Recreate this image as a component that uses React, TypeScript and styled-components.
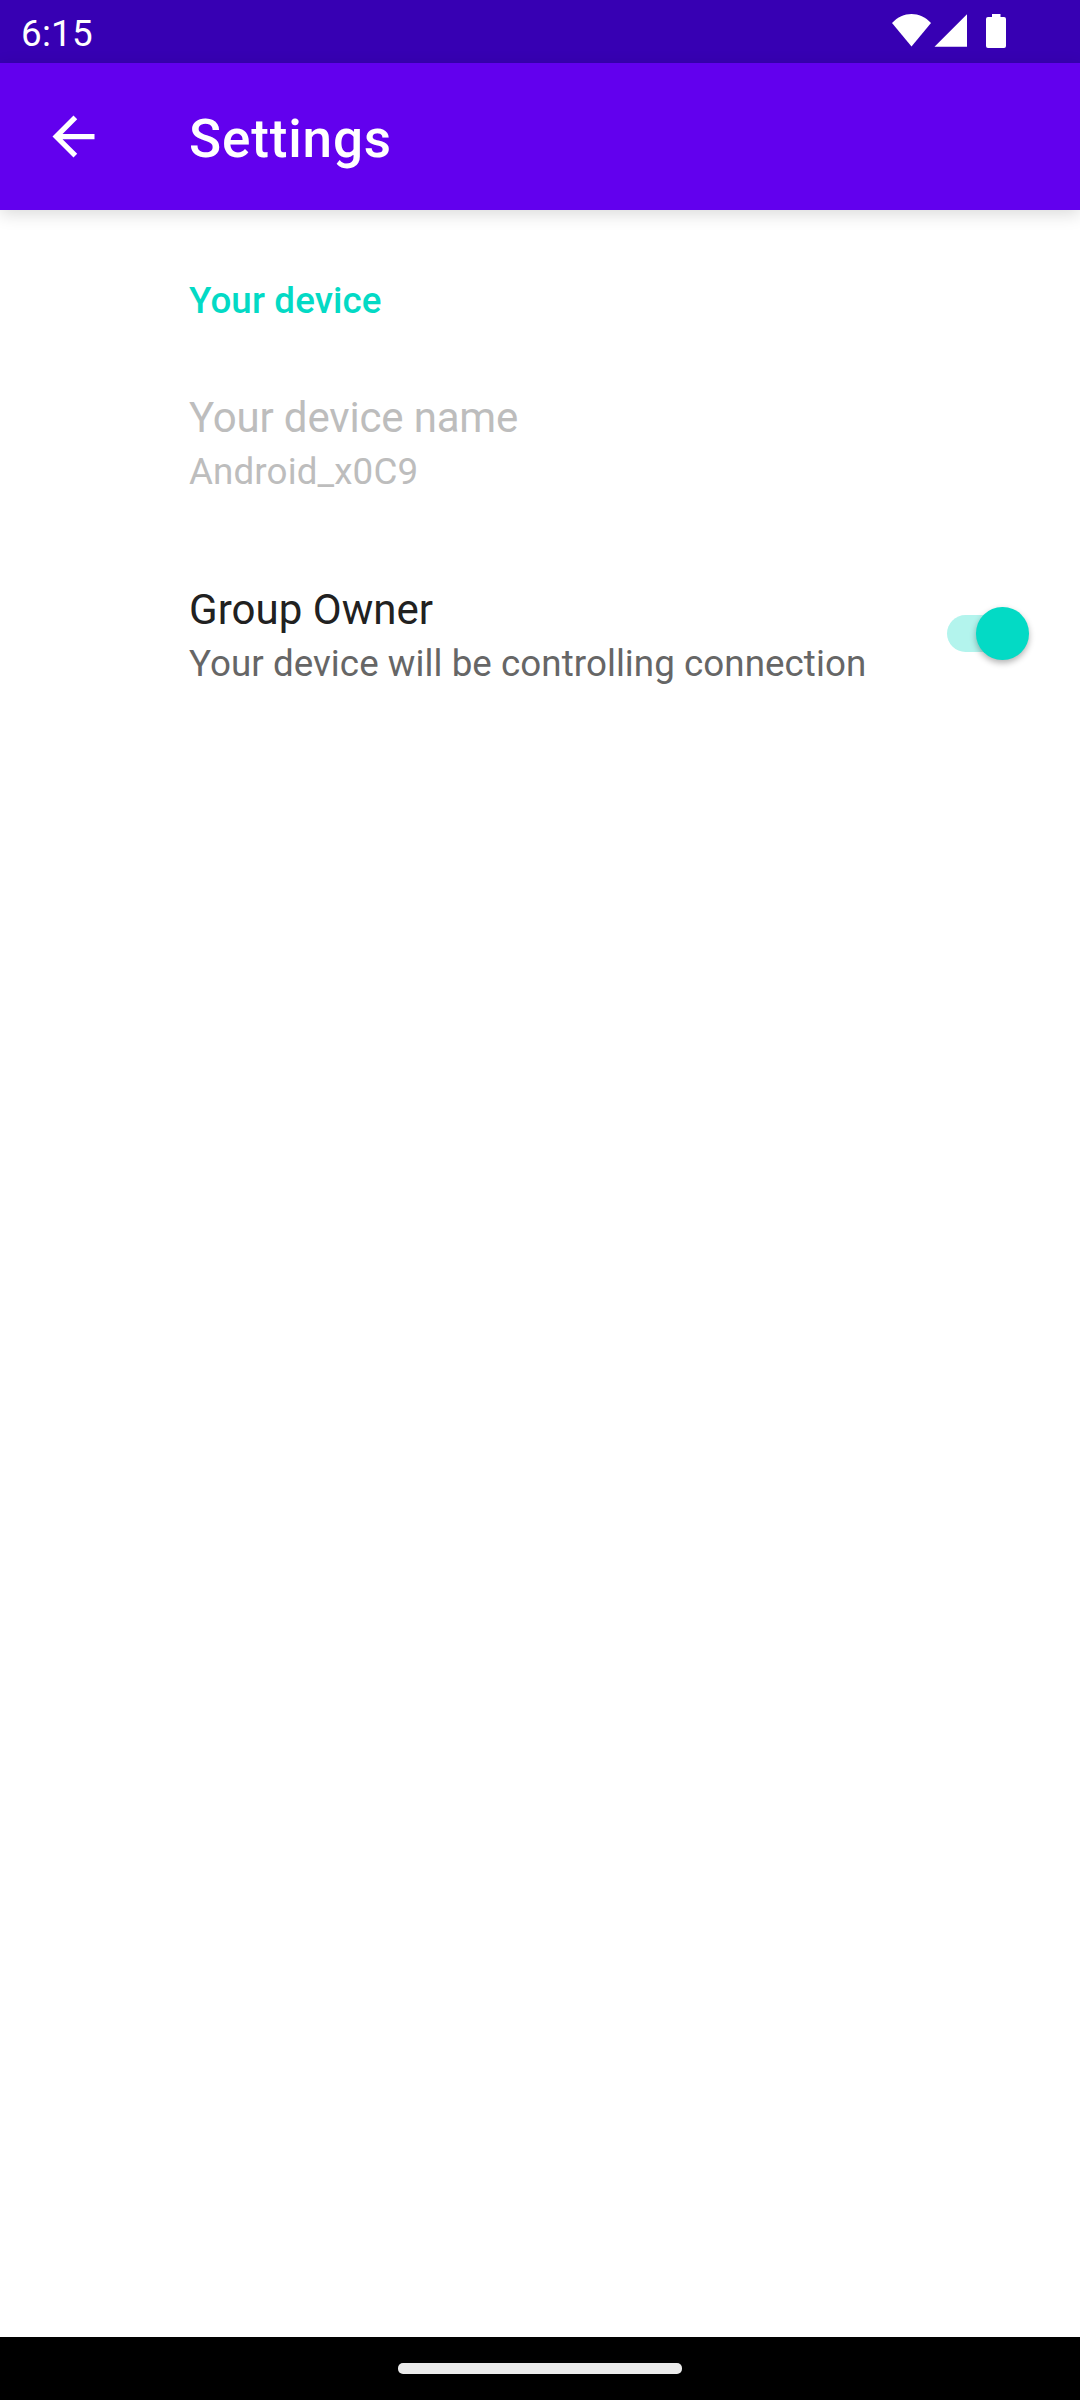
import React, { useState } from "react";
import styled, { createGlobalStyle } from "styled-components";

const GlobalStyle = createGlobalStyle`
  *, *::before, *::after { box-sizing: border-box; }
  body { margin: 0; background: #fff; }
`;

const Screen = styled.div`
  display: flex;
  flex-direction: column;
  width: 1080px;
  height: 2400px;
  background: #fff;
  font-family: Roboto, "Noto Sans", sans-serif;
  overflow: hidden;
`;

const StatusBar = styled.header`
  display: flex;
  align-items: flex-start;
  justify-content: space-between;
  flex: 0 0 63px;
  padding: 0 74px 0 21px;
  background: #3700b3;
  color: #fff;
`;

const Clock = styled.span`
  padding-top: 11px;
  font-size: 36.75px;
  letter-spacing: 0.25px;
  line-height: 45px;
`;

const StatusIcons = styled.svg`
  width: 114px;
  height: 34px;
  margin-top: 14px;
  fill: #fff;
`;

const AppBar = styled.nav`
  display: flex;
  align-items: center;
  flex: 0 0 147px;
  padding: 0 42px;
  background: #6200ee;
  color: #fff;
  box-shadow: 0 4px 16px rgba(0, 0, 0, 0.15);
`;

const BackButton = styled.button`
  display: flex;
  width: 63px;
  height: 63px;
  margin-right: 84px;
  padding: 0;
  border: 0;
  background: none;
  color: inherit;
`;

const PageTitle = styled.h1`
  margin: 5px 0 0;
  font-size: 53px;
  font-weight: 500;
  letter-spacing: 0.85px;
  line-height: 62px;
`;

const Content = styled.main`
  flex: 1;
`;

const Category = styled.h2`
  height: 136px;
  margin: 0;
  padding: 65px 42px 0 189px;
  color: #03dac5;
  font-size: 36.75px;
  font-weight: 500;
  letter-spacing: 0.12px;
  line-height: 51px;
`;

const Preference = styled.div`
  display: flex;
  align-items: center;
  justify-content: space-between;
  height: 192px;
  padding: 0 51.5px 0 189px;
`;

const Labels = styled.div`
  padding-top: 2px;
  white-space: nowrap;
`;

const Title = styled.div<{ $disabled?: boolean }>`
  color: ${(p) => (p.$disabled ? "#bdbdbd" : "#212121")};
  font-size: 42px;
  letter-spacing: ${(p) => (p.$disabled ? "-0.16px" : "0.04px")};
  line-height: 57px;
`;

const Summary = styled.div<{ $disabled?: boolean }>`
  color: ${(p) => (p.$disabled ? "#bdbdbd" : "#666")};
  font-size: 36.75px;
  letter-spacing: ${(p) => (p.$disabled ? "0.12px" : "0.05px")};
  line-height: 51px;
`;

const Toggle = styled.button`
  display: grid;
  align-items: center;
  width: 82px;
  height: 53px;
  margin-bottom: 1px;
  padding: 0;
  border: 0;
  background: none;
`;

const Rail = styled.span<{ $on: boolean }>`
  grid-area: 1 / 1;
  width: 76px;
  height: 37px;
  border-radius: 19px;
  background: ${(p) => (p.$on ? "#b3f4ed" : "#bbb")};
`;

const Thumb = styled.span<{ $on: boolean }>`
  grid-area: 1 / 1;
  justify-self: ${(p) => (p.$on ? "end" : "start")};
  width: 52.5px;
  height: 52.5px;
  border-radius: 50%;
  background: ${(p) => (p.$on ? "#03dac5" : "#ececec")};
  box-shadow: 0 3px 6px rgba(0, 0, 0, 0.3);
`;

const NavigationBar = styled.footer`
  display: flex;
  justify-content: center;
  flex: 0 0 63px;
  padding-top: 26px;
  background: #000;
`;

const HomeHandle = styled.span`
  width: 284px;
  height: 11px;
  border-radius: 5px;
  background: #ebebeb;
`;

export default function App() {
  const [groupOwner, setGroupOwner] = useState(true);

  return (
    <Screen>
      <GlobalStyle />
      <StatusBar>
        <Clock>6:15</Clock>
        <StatusIcons viewBox="0 0 114 34">
          <path d="M0 9C11-3 28-3 39 9L19.5 32.5Z" />
          <path d="M75 .3V32.8H42.5Z" />
          <path d="M100 0h8.500v3h3.500q2 0 2 2v27q0 2-2 2h-16q-2 0-2-2V5q0-2 2-2h4z" />
        </StatusIcons>
      </StatusBar>
      <AppBar>
        <BackButton aria-label="Navigate up">
          <svg width="63" height="63" viewBox="0 0 24 24" fill="currentColor">
            <path d="M20 11H7.830l5.590-5.590L12 4l-8 8 8 8 1.410-1.410L7.830 13H20v-2z" />
          </svg>
        </BackButton>
        <PageTitle>Settings</PageTitle>
      </AppBar>
      <Content>
        <Category>Your device</Category>
        <Preference>
          <Labels>
            <Title $disabled>Your device name</Title>
            <Summary $disabled>Android_x0C9</Summary>
          </Labels>
        </Preference>
        <Preference>
          <Labels>
            <Title>Group Owner</Title>
            <Summary>Your device will be controlling connection</Summary>
          </Labels>
          <Toggle
            role="switch"
            aria-checked={groupOwner}
            aria-label="Group Owner"
            onClick={() => setGroupOwner(!groupOwner)}
          >
            <Rail $on={groupOwner} />
            <Thumb $on={groupOwner} />
          </Toggle>
        </Preference>
      </Content>
      <NavigationBar>
        <HomeHandle />
      </NavigationBar>
    </Screen>
  );
}
